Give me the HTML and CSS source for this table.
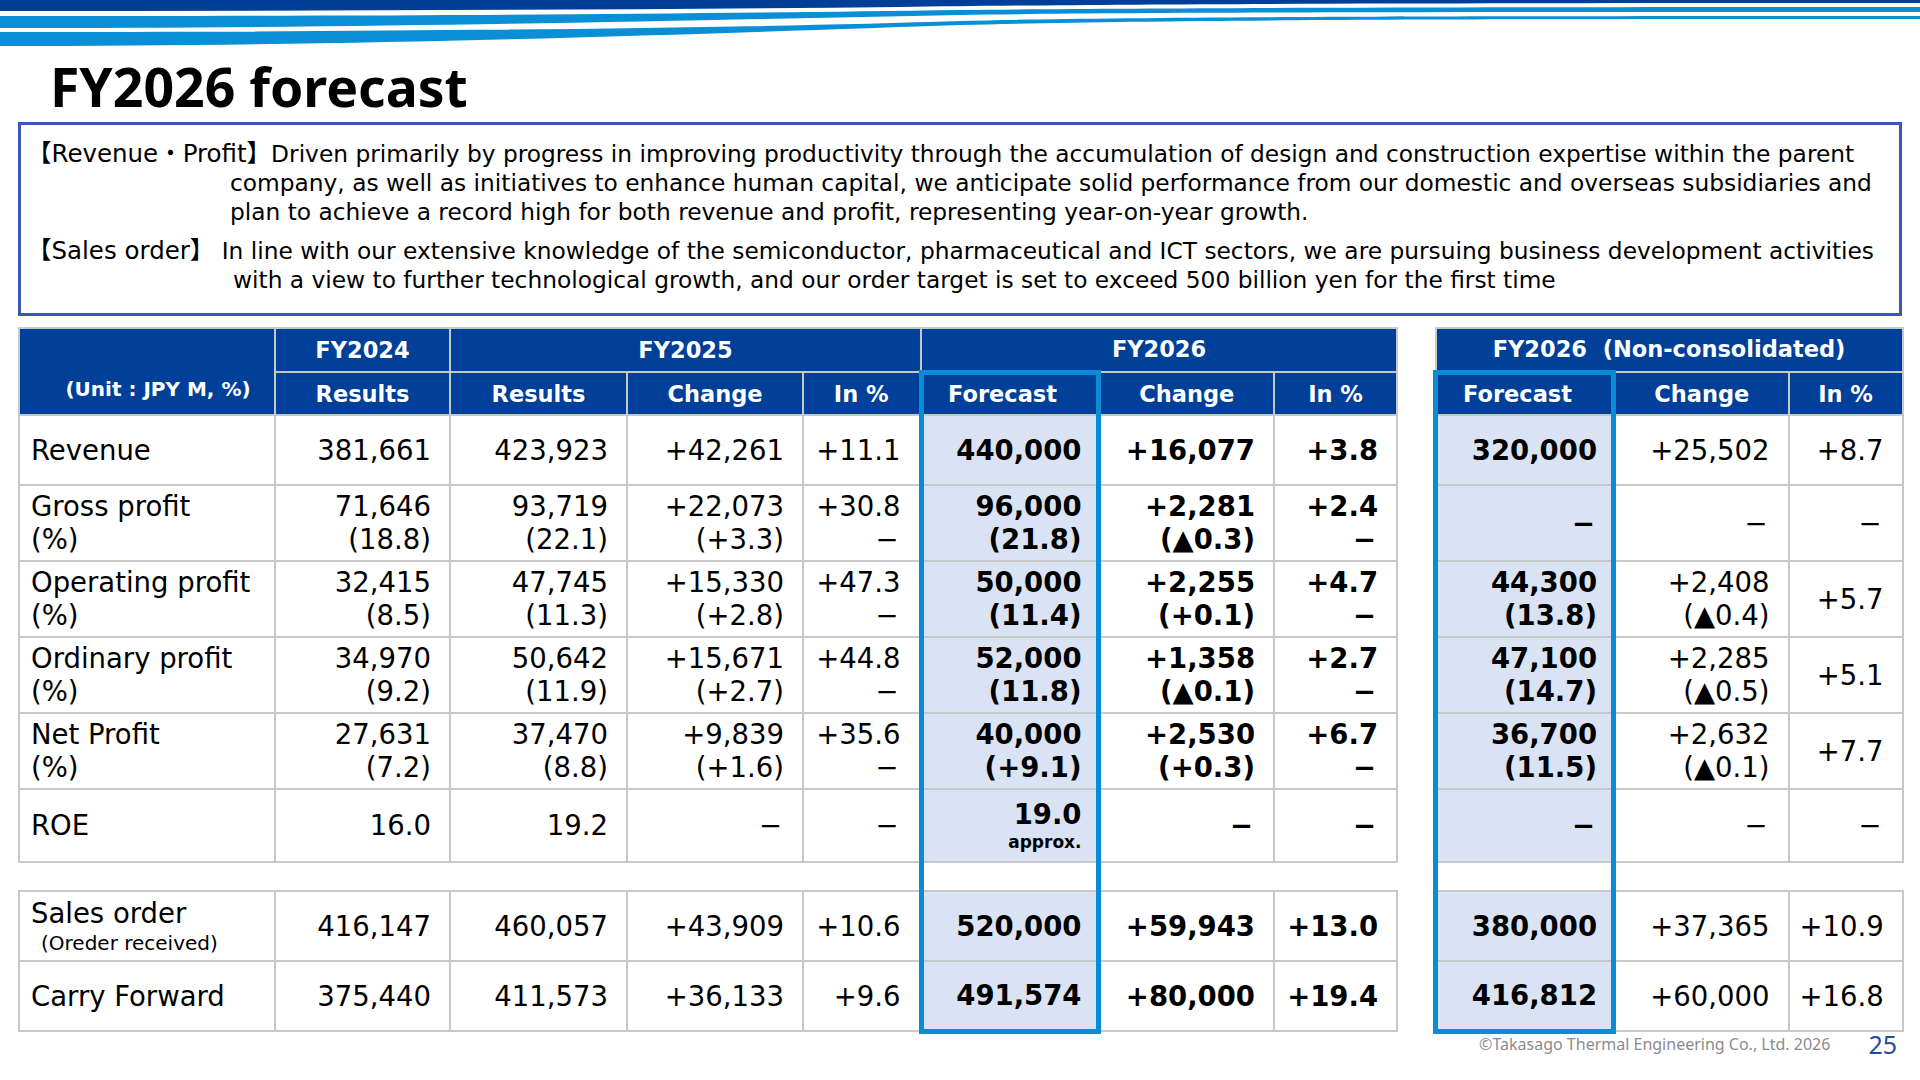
FILE: index.html
```html
<!DOCTYPE html>
<html lang="en-US">
<head>
    <meta charset="UTF-8">
    <title>FY2026 forecast</title>
    <link rel="stylesheet" href="styles.css">
</head>
<body>
    <header class="stripes">
        <svg width="1920" height="46" viewBox="0 0 1920 46">
            <path fill="#003f98" d="M0 0 H1920 V3 C1400 3 1100 4 900 7 C600 10 300 11 0 11 Z"/>
            <path fill="#0a8ed6" d="M0 16 C400 16 700 14 960 10 C1150 8 1500 7 1920 7 V12 C1500 12 1150 12 960 15 C700 20 400 28 0 28 Z"/>
            <path fill="#0a8ed6" d="M0 32 C400 32 750 28 960 21 C1100 17 1400 16 1920 16 V19 C1400 19 1150 20 960 25 C750 32 400 46 0 46 Z"/>
        </svg>
    </header>

    <h1 class="title">FY2026 forecast</h1>

    <section class="summary">
        <p class="summary-item"><span class="tag">【Revenue・Profit】</span>Driven primarily by progress in improving productivity through the accumulation of design and construction expertise within the parent<br>company, as well as initiatives to enhance human capital, we anticipate solid performance from our domestic and overseas subsidiaries and<br>plan to achieve a record high for both revenue and profit, representing year-on-year growth.</p>
        <p class="summary-item summary-order"><span class="tag">【Sales order】</span> In line with our extensive knowledge of the semiconductor, pharmaceutical and ICT sectors, we are pursuing business development activities<br>with a view to further technological growth, and our order target is set to exceed 500 billion yen for the first time</p>
    </section>

    <div class="tables">
        <table class="fin fin-main">
            <colgroup>
                <col class="col-label">
                <col class="col-175">
                <col class="col-177">
                <col class="col-176">
                <col class="col-118">
                <col class="col-177">
                <col class="col-176">
                <col class="col-123">
            </colgroup>
            <thead>
                <tr class="head-top">
                    <th rowspan="2" class="unit">(Unit : JPY M, %)</th>
                    <th>FY2024</th>
                    <th colspan="3">FY2025</th>
                    <th colspan="3">FY2026</th>
                </tr>
                <tr class="head-sub">
                    <th>Results</th>
                    <th>Results</th>
                    <th>Change</th>
                    <th>In %</th>
                    <th class="fc">Forecast</th>
                    <th>Change</th>
                    <th>In %</th>
                </tr>
            </thead>
            <tbody>
                <tr class="row">
                    <td class="label">Revenue</td>
                    <td>381,661</td><td>423,923</td><td>+42,261</td><td>+11.1</td>
                    <td class="fc b">440,000</td><td class="b">+16,077</td><td class="b">+3.8</td>
                </tr>
                <tr class="row row-2">
                    <td class="label">Gross profit<br>(%)</td>
                    <td>71,646<br>(18.8)</td><td>93,719<br>(22.1)</td><td>+22,073<br>(+3.3)</td><td>+30.8<br><span class="dash">−</span></td>
                    <td class="fc b">96,000<br>(21.8)</td><td class="b">+2,281<br>(▲0.3)</td><td class="b">+2.4<br><span class="dash">−</span></td>
                </tr>
                <tr class="row row-2">
                    <td class="label">Operating profit<br>(%)</td>
                    <td>32,415<br>(8.5)</td><td>47,745<br>(11.3)</td><td>+15,330<br>(+2.8)</td><td>+47.3<br><span class="dash">−</span></td>
                    <td class="fc b">50,000<br>(11.4)</td><td class="b">+2,255<br>(+0.1)</td><td class="b">+4.7<br><span class="dash">−</span></td>
                </tr>
                <tr class="row row-2">
                    <td class="label">Ordinary profit<br>(%)</td>
                    <td>34,970<br>(9.2)</td><td>50,642<br>(11.9)</td><td>+15,671<br>(+2.7)</td><td>+44.8<br><span class="dash">−</span></td>
                    <td class="fc b">52,000<br>(11.8)</td><td class="b">+1,358<br>(▲0.1)</td><td class="b">+2.7<br><span class="dash">−</span></td>
                </tr>
                <tr class="row row-2">
                    <td class="label">Net Profit<br>(%)</td>
                    <td>27,631<br>(7.2)</td><td>37,470<br>(8.8)</td><td>+9,839<br>(+1.6)</td><td>+35.6<br><span class="dash">−</span></td>
                    <td class="fc b">40,000<br>(+9.1)</td><td class="b">+2,530<br>(+0.3)</td><td class="b">+6.7<br><span class="dash">−</span></td>
                </tr>
                <tr class="row row-roe">
                    <td class="label">ROE</td>
                    <td>16.0</td><td>19.2</td><td><span class="dash">−</span></td><td><span class="dash">−</span></td>
                    <td class="fc b">19.0<span class="approx">approx.</span></td><td class="b"><span class="dash">−</span></td><td class="b"><span class="dash">−</span></td>
                </tr>
                <tr class="gap">
                    <td colspan="5"></td><td class="fc"></td><td colspan="2"></td>
                </tr>
                <tr class="row">
                    <td class="label">Sales order<span class="sub">(Oreder received)</span></td>
                    <td>416,147</td><td>460,057</td><td>+43,909</td><td>+10.6</td>
                    <td class="fc b">520,000</td><td class="b">+59,943</td><td class="b">+13.0</td>
                </tr>
                <tr class="row">
                    <td class="label">Carry Forward</td>
                    <td>375,440</td><td>411,573</td><td>+36,133</td><td>+9.6</td>
                    <td class="fc fc-end b">491,574</td><td class="b">+80,000</td><td class="b">+19.4</td>
                </tr>
            </tbody>
        </table>

        <table class="fin fin-side">
            <colgroup>
                <col class="col-178">
                <col class="col-175">
                <col class="col-114">
            </colgroup>
            <thead>
                <tr class="head-top">
                    <th colspan="3">FY2026 &nbsp;(Non-consolidated)</th>
                </tr>
                <tr class="head-sub">
                    <th class="fc">Forecast</th>
                    <th>Change</th>
                    <th>In %</th>
                </tr>
            </thead>
            <tbody>
                <tr class="row">
                    <td class="fc b">320,000</td><td>+25,502</td><td>+8.7</td>
                </tr>
                <tr class="row row-2">
                    <td class="fc b"><span class="dash">−</span></td><td><span class="dash">−</span></td><td><span class="dash">−</span></td>
                </tr>
                <tr class="row row-2">
                    <td class="fc b">44,300<br>(13.8)</td><td>+2,408<br>(▲0.4)</td><td>+5.7</td>
                </tr>
                <tr class="row row-2">
                    <td class="fc b">47,100<br>(14.7)</td><td>+2,285<br>(▲0.5)</td><td>+5.1</td>
                </tr>
                <tr class="row row-2">
                    <td class="fc b">36,700<br>(11.5)</td><td>+2,632<br>(▲0.1)</td><td>+7.7</td>
                </tr>
                <tr class="row row-roe">
                    <td class="fc b"><span class="dash">−</span></td><td><span class="dash">−</span></td><td><span class="dash">−</span></td>
                </tr>
                <tr class="gap">
                    <td class="fc"></td><td colspan="2"></td>
                </tr>
                <tr class="row">
                    <td class="fc b">380,000</td><td>+37,365</td><td>+10.9</td>
                </tr>
                <tr class="row">
                    <td class="fc fc-end b">416,812</td><td>+60,000</td><td>+16.8</td>
                </tr>
            </tbody>
        </table>
    </div>

    <footer class="foot">
        <span class="copy">©Takasago Thermal Engineering Co., Ltd. 2026</span>
        <span class="page-no">25</span>
    </footer>
</body>
</html>
```

FILE: styles.css
```css
:root {
    --navy: #004098;
    --accent: #0a8bd6;
    --shade: #dae3f3;
    --grid: #c8c8c8;
    --frame: #3b56b6;
}

* {
    margin: 0;
    padding: 0;
    box-sizing: border-box;
}

body {
    width: 1920px;
    height: 1080px;
    overflow: hidden;
    background: #fff;
    color: #000;
    font-family: "DejaVu Sans", "Noto Sans CJK JP", sans-serif;
}

.stripes svg {
    display: block;
}

.title {
    font-family: "Noto Sans", sans-serif;
    font-weight: 700;
    font-size: 53.5px;
    line-height: 60px;
    margin: 11px 0 5px 50px;
}

/* summary box */
.summary {
    margin: 0 18px;
    height: 194px;
    border: 3px solid var(--frame);
    padding: 14px 0 0 6px;
    font-family: "DejaVu Sans", "Noto Sans CJK JP", sans-serif;
    font-size: 23.3px;
    line-height: 29px;
}

.summary-item {
    white-space: nowrap;
    padding-left: 203px;
    text-indent: -203px;
}

.summary-item + .summary-item {
    margin-top: 10px;
}

.summary-order {
    padding-left: 206px;
    text-indent: -206px;
}

.tag {
    font-size: 24.5px;
}

/* tables */
.tables {
    display: flex;
    align-items: flex-start;
    gap: 35px;
    margin: 11px 18px 0;
}

.fin {
    border-collapse: collapse;
    table-layout: fixed;
    font-size: 27.5px;
}

.fin-main { width: 1378px; }
.fin-side { width: 467px; }

.col-label { width: 256px; }
.col-175 { width: 175px; }
.col-177 { width: 177px; }
.col-176 { width: 176px; }
.col-118 { width: 118px; }
.col-123 { width: 123px; }
.col-178 { width: 178px; }
.col-114 { width: 114px; }

.fin th {
    background: var(--navy);
    color: #fff;
    font-size: 22.5px;
    font-weight: 700;
    text-align: center;
    border: 2px solid var(--grid);
}

.fin td {
    border: 2px solid var(--grid);
    text-align: right;
    vertical-align: middle;
    padding: 0 18px 0 10px;
    line-height: 33px;
}

.fin td.label {
    text-align: left;
    padding-left: 11px;
}

.fin th.unit {
    font-size: 20px;
    padding: 34px 0 0 22px;
}

.head-top { height: 44px; }
.head-sub { height: 43px; }
.row { height: 70px; }
.row-2 { height: 76px; }
.row-roe { height: 73px; }
.gap { height: 29px; }

.b {
    font-weight: 700;
}

.dash {
    display: inline-block;
    padding-right: 2px;
}

.fin .fc {
    background: var(--shade);
    border-left: 5px solid var(--accent);
    border-right: 5px solid var(--accent);
    padding-right: 14px;
}

.fin th.fc {
    background: var(--navy);
    border-top: 5px solid var(--accent);
}

.fin .fc-end {
    border-bottom: 5px solid var(--accent);
}

.fin .gap td {
    border: none;
}

.fin .gap .fc {
    background: none;
    border-left: 5px solid var(--accent);
    border-right: 5px solid var(--accent);
}

.approx {
    display: block;
    font-size: 17px;
    line-height: 22px;
}

.sub {
    display: block;
    font-size: 20px;
    line-height: 26px;
    padding-left: 10px;
}

/* footer */
.foot {
    display: flex;
    justify-content: flex-end;
    align-items: center;
    gap: 38px;
    margin-right: 23px;
    line-height: 20px;
    font-family: "Noto Sans", sans-serif;
}

.copy {
    font-size: 16px;
    color: #8c8c8c;
}

.page-no {
    font-size: 25px;
    color: #1f4ea0;
}
```
